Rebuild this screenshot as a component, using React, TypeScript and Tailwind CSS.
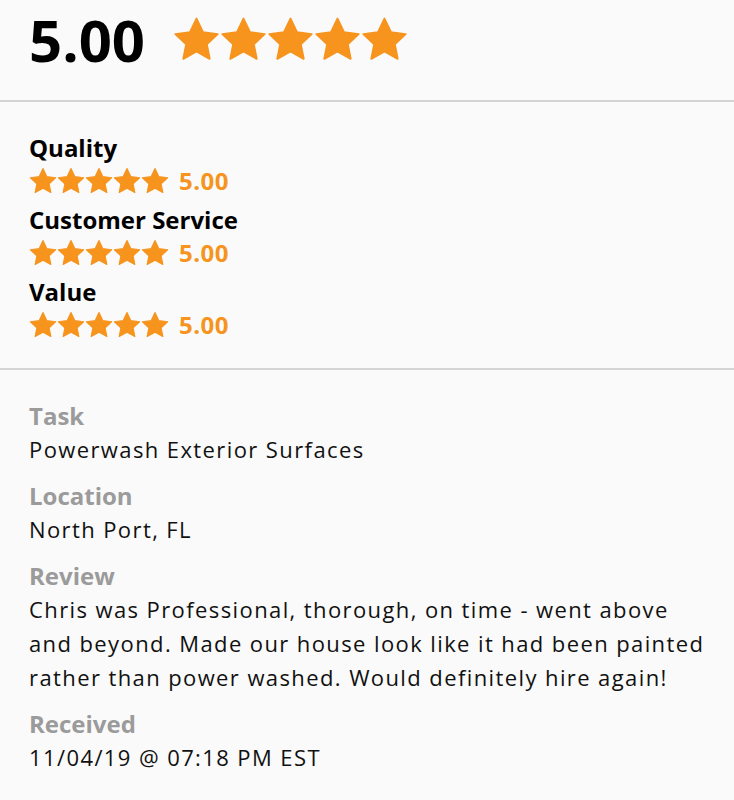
const orange = '#f7941d'

function Star({ size }: { size: number }) {
  return (
    <svg width={size} height={size} viewBox="0 0 24 24" className="shrink-0">
      <path
        d="M12 1.3l3.3 7 7.5.95-5.55 5.15 1.47 7.45L12 18.1l-6.72 3.75 1.47-7.45L1.2 9.25l7.5-.95z"
        fill={orange}
        stroke={orange}
        strokeWidth="1"
        strokeLinejoin="round"
      />
    </svg>
  )
}

function Stars({ size }: { size: number }) {
  return (
    <div className="flex">
      {[0, 1, 2, 3, 4].map((i) => (
        <Star key={i} size={size} />
      ))}
    </div>
  )
}

const ratings = ['Quality', 'Customer Service', 'Value']

const details = [
  { label: 'Task', value: 'Powerwash Exterior Surfaces' },
  { label: 'Location', value: 'North Port, FL' },
  {
    label: 'Review',
    value:
      'Chris was Professional, thorough, on time - went above and beyond. Made our house look like it had been painted rather than power washed. Would definitely hire again!',
  },
  { label: 'Received', value: '11/04/19 @ 07:18 PM EST' },
]

export default function App() {
  return (
    <div
      className="min-h-screen bg-[#fafafa] text-[#111]"
      style={{ fontFamily: '"Open Sans", "Liberation Sans", sans-serif' }}
    >
      <div className="flex items-center h-[102px] pl-[29px] pb-[21px] gap-[28px] border-b-2 border-[#d4d4d4]">
        <span className="text-[58px] font-bold leading-[80px] text-black">5.00</span>
        <Stars size={47} />
      </div>

      <div className="pl-[29px] pt-[30px] pb-[26px] flex flex-col gap-[6px] border-b-2 border-[#d4d4d4]">
        {ratings.map((r) => (
          <div key={r} className="flex flex-col">
            <span className="text-[24px] font-bold leading-[32px] text-black">{r}</span>
            <div className="flex items-center gap-[10px] h-[34px]">
              <Stars size={28} />
              <span className="text-[24px] font-bold tracking-[0.5px]" style={{ color: orange }}>
                5.00
              </span>
            </div>
          </div>
        ))}
      </div>

      <div className="pl-[29px] pr-[22px] pt-[30px] flex flex-col gap-[14px]">
        {details.map((d) => (
          <div key={d.label} className="flex flex-col">
            <span className="text-[24px] font-bold leading-[32px] text-[#9b9b9b]">{d.label}</span>
            <span className="text-[22px] leading-[34px] tracking-[1.4px] text-[#111]">{d.value}</span>
          </div>
        ))}
      </div>
    </div>
  )
}
